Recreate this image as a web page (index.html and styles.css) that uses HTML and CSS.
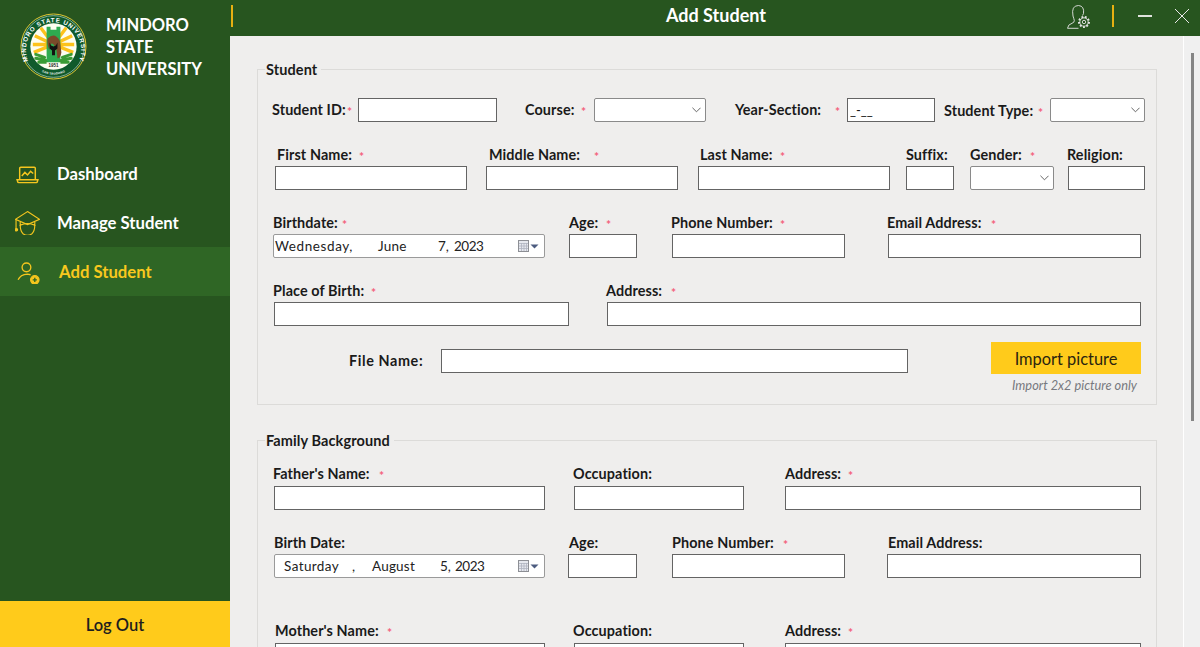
FILE: index.html
```html
<!DOCTYPE html>
<html lang="en">
<head>
<meta charset="utf-8">
<title>Add Student</title>
<link rel="stylesheet" href="styles.css">
</head>
<body>
<div class="app">
  <aside class="sidebar">
    <div class="brand">
      <svg class="seal" viewBox="0 0 68 68" aria-hidden="true">
        <defs>
          <path id="arcTop" d="M9 50 A28 28 0 1 1 59 50"/>
          <path id="arcBot" d="M16 55 A25 25 0 0 0 52 55"/>
        </defs>
        <circle cx="34" cy="34" r="33" fill="#0f5a2c" stroke="#e7c533" stroke-width="1"/>
        <circle cx="34" cy="34" r="31.300" fill="none" stroke="#fff" stroke-width=".5"/>
        <text class="seal-ring"><textPath href="#arcTop" startOffset="50%" text-anchor="middle">MINDORO STATE UNIVERSITY</textPath></text>
        <text class="seal-low"><textPath href="#arcBot" startOffset="50%" text-anchor="middle">SAN TEODORO</textPath></text>
        <circle cx="34" cy="34" r="23.500" fill="#fdfdf0"/>
        <g stroke="#fcc21c" stroke-width="3.400">
          <path d="M34 32 L13 32M34 32 L15 23M34 32 L21 15M34 32 L55 32M34 32 L53 23M34 32 L47 15M34 32 L14 40M34 32 L54 40"/>
        </g>
        <path d="M27 14h4v3h6v-3h4v37h-14z" fill="#2eab50"/>
        <path d="M28 26 q5 -5 9 -2 q4 3 4 8 l1 8 q-1 6 -4 6 l-1 -9 q-3 -7 -5 -6 q-3 2 -2 7 q-3 -6 -2 -12z" fill="#7a4a2a"/>
        <path d="M30 30l1.500 3 2.500 1 2.500-1 1.500-3v6l-2.500 2v5h-3v-5l-2.500-2z" fill="#111"/>
        <g stroke="#3a9b35" stroke-width="3" stroke-linecap="round">
          <path d="M16 42 l9 3M16 46 l10 2M19 50 l8 0M52 42 l-9 3M52 46 l-10 2M49 50 l-8 0"/>
        </g>
        <rect x="27" y="50" width="14" height="6" fill="#fdfdf0"/>
        <text class="seal-year" x="34" y="55" text-anchor="middle">1951</text>
      </svg>
      <div class="brand-name">MINDORO<br>STATE<br>UNIVERSITY</div>
    </div>
    <nav class="nav">
      <a class="nav-item">
        <svg class="nav-icon" viewBox="0 -1.500 24 24" fill="none" stroke="#f5c61e" stroke-width="1.400" aria-hidden="true">
          <path d="M4.500 15V4.500a1 1 0 0 1 1-1h13a1 1 0 0 1 1 1V15"/>
          <path d="M2 15.500h20l-.6 2a1 1 0 0 1-1 .8H3.600a1 1 0 0 1-1-.8z"/>
          <path d="M6.500 12l3-3.500 2.500 2.500 3-3.500 2.500 2"/>
        </svg>
        <span>Dashboard</span>
      </a>
      <a class="nav-item">
        <svg class="nav-icon" viewBox="0 -1 24 24" fill="none" stroke="#f5c61e" stroke-width="1.100" aria-hidden="true">
          <path d="M12 0.500 L23.500 8 L12 13 L0.500 8z"/>
          <path d="M5 10.500 v3 q7 -3 14 0 v-3"/>
          <path d="M5 13.500 q0 6 3 8.500 q4 2.500 8 0 q3 -2.500 3 -8.500"/>
          <path d="M1 8.500 V17"/>
          <circle cx="1.300" cy="18" r="1.200" fill="#f5c61e"/>
        </svg>
        <span>Manage Student</span>
      </a>
      <a class="nav-item is-active">
        <svg class="nav-icon" viewBox="0 -2 24 24" fill="none" stroke="#f5c61e" stroke-width="1.300" aria-hidden="true">
          <circle cx="11" cy="6" r="4.200"/>
          <path d="M3 18 q2 -5 9 -5.500 l3 .6"/>
          <circle cx="19" cy="18" r="4" fill="#f5c61e"/>
          <path d="M17 18h4M19 16v4" stroke="#2f6625"/>
        </svg>
        <span>Add Student</span>
      </a>
    </nav>
    <button class="logout" type="button">Log Out</button>
  </aside>

  <div class="main">
    <header class="topbar">
      <span class="rule"></span>
      <h1 class="title">Add Student</h1>
      <svg class="account" viewBox="0 0 24 24" fill="none" stroke="#e4e4e4" stroke-width=".9" aria-hidden="true">
        <path d="M6 11 q-2 -10.500 5.500 -10.500 q6 .5 5 8 l-1 2"/>
        <path d="M6 11 q1 3 1.300 4.500 q.2 2 -2.300 2.800 q-4 1 -4.500 5 h11"/>
        <circle cx="17" cy="17" r="5" stroke-width="2" stroke-dasharray="1.800 1.600"/>
        <circle cx="17" cy="17" r="4.200"/>
        <circle cx="17" cy="17" r="1.700"/>
      </svg>
      <span class="rule rule-right"></span>
      <span class="min-btn"></span>
      <svg class="close-btn" viewBox="0 0 14 14" stroke="#e8e8e8" stroke-width="1" aria-hidden="true"><path d="M0 0L14 14M14 0L0 14"/></svg>
    </header>
    <div class="body">
      <form class="content">
        <fieldset class="group group-student">
          <legend>Student</legend>
          <div class="row r1">
            <div class="inline i1"><label class="lbl sw74"><span>Student ID:</span><i class="req">*</i></label><input class="box" type="text"></div>
            <div class="inline i2"><label class="lbl sw55"><span>Course:</span><i class="req">*</i></label><div class="combo"><svg class="chev" viewBox="0 0 10 6"><path d="M.5.500L5 5 9.500.500"/></svg></div></div>
            <div class="inline i3"><label class="lbl sw99"><span>Year-Section:</span><i class="req">*</i></label><input class="box mask" type="text" value="_-__"></div>
            <div class="inline i4"><label class="lbl sw93"><span>Student Type:</span><i class="req">*</i></label><div class="combo"><svg class="chev" viewBox="0 0 10 6"><path d="M.5.500L5 5 9.500.500"/></svg></div></div>
          </div>
          <div class="row r2">
            <div class="field"><label class="lbl o2 sw81"><span>First Name:</span><i class="req">*</i></label><input class="box" type="text"></div>
            <div class="field"><label class="lbl o3 sw104"><span>Middle Name:</span><i class="req">*</i></label><input class="box" type="text"></div>
            <div class="field"><label class="lbl o2 sw79"><span>Last Name:</span><i class="req">*</i></label><input class="box" type="text"></div>
            <div class="field"><label class="lbl"><span>Suffix:</span></label><input class="box" type="text"></div>
            <div class="field"><label class="lbl sw59"><span>Gender:</span><i class="req">*</i></label><div class="combo"><svg class="chev" viewBox="0 0 10 6"><path d="M.5.500L5 5 9.500.500"/></svg></div></div>
            <div class="field"><label class="lbl on1"><span>Religion:</span></label><input class="box" type="text"></div>
          </div>
          <div class="row r3">
            <div class="field"><label class="lbl sw68"><span>Birthdate:</span><i class="req">*</i></label>
              <div class="date dw-a"><span class="d1">Wednesday,</span><span class="d2">June</span><span class="d3">7,</span><span class="dy">2023</span>
                <svg class="cal" viewBox="0 0 21 12"><rect x=".5" y=".5" width="10" height="11" fill="#e6e8ee" stroke="#8d8f95"/><path d="M1 3.500h9M1 6h9M1 8.500h9M3.500 3v8M6 3v8M8.500 3v8" stroke="#aeb3bf" stroke-width=".8"/><path d="M12.500 4.500h8l-4 4z" fill="#4d5c80"/></svg></div></div>
            <div class="field"><label class="lbl sw36"><span>Age:</span><i class="req">*</i></label><input class="box" type="text"></div>
            <div class="field"><label class="lbl on1 sw108"><span>Phone Number:</span><i class="req">*</i></label><input class="box" type="text"></div>
            <div class="field"><label class="lbl on1 sw103"><span>Email Address:</span><i class="req">*</i></label><input class="box" type="text"></div>
          </div>
          <div class="row r4">
            <div class="field"><label class="lbl on1 sw97"><span>Place of Birth:</span><i class="req">*</i></label><input class="box" type="text"></div>
            <div class="field"><label class="lbl on1 sw64"><span>Address:</span><i class="req">*</i></label><input class="box" type="text"></div>
          </div>
          <div class="r5">
            <label class="lbl file-lbl"><span>File Name:</span></label>
            <input class="box file-box" type="text">
            <div class="import">
              <button class="import-btn" type="button">Import picture</button>
              <p class="note">Import 2x2 picture only</p>
            </div>
          </div>
        </fieldset>

        <fieldset class="group group-family">
          <legend>Family Background</legend>
          <div class="row f1">
            <div class="field"><label class="lbl on1 sw105"><span>Father's Name:</span><i class="req">*</i></label><input class="box" type="text"></div>
            <div class="field"><label class="lbl on1"><span>Occupation:</span></label><input class="box" type="text"></div>
            <div class="field"><label class="lbl sw62"><span>Address:</span><i class="req">*</i></label><input class="box" type="text"></div>
          </div>
          <div class="row f2">
            <div class="field"><label class="lbl"><span>Birth Date:</span></label>
              <div class="date dw-b"><span class="e1">Saturday</span><span class="e2">,</span><span class="e3">August</span><span class="e4">5,</span><span class="dy">2023</span>
                <svg class="cal" viewBox="0 0 21 12"><rect x=".5" y=".5" width="10" height="11" fill="#e6e8ee" stroke="#8d8f95"/><path d="M1 3.500h9M1 6h9M1 8.500h9M3.500 3v8M6 3v8M8.500 3v8" stroke="#aeb3bf" stroke-width=".8"/><path d="M12.500 4.500h8l-4 4z" fill="#4d5c80"/></svg></div></div>
            <div class="field"><label class="lbl o1"><span>Age:</span></label><input class="box" type="text"></div>
            <div class="field"><label class="lbl sw110"><span>Phone Number:</span><i class="req">*</i></label><input class="box" type="text"></div>
            <div class="field"><label class="lbl o1"><span>Email Address:</span></label><input class="box" type="text"></div>
          </div>
          <div class="row f3">
            <div class="field"><label class="lbl sw111"><span>Mother's Name:</span><i class="req">*</i></label><input class="box" type="text"></div>
            <div class="field"><label class="lbl on1"><span>Occupation:</span></label><input class="box" type="text"></div>
            <div class="field"><label class="lbl sw62"><span>Address:</span><i class="req">*</i></label><input class="box" type="text"></div>
          </div>
        </fieldset>
      </form>
      <div class="scrollbar"><div class="thumb"></div></div>
    </div>
  </div>
</div>
</body>
</html>
```
FILE: styles.css
```css
* { box-sizing: border-box; }
html, body { margin: 0; height: 100%; overflow: hidden; }
body { font-family: "Lato", "Liberation Sans", sans-serif; color: #1a1a1a; }
.app { display: flex; width: 1200px; height: 647px; overflow: hidden; }

/* sidebar */
.sidebar { width: 230px; flex: none; background: #27551f; display: flex; flex-direction: column; }
.brand { display: flex; height: 150px; padding: 13px 0 0 20px; }
.seal { width: 67px; height: 67px; flex: none; }
.seal-ring { font: 700 6.300px "Liberation Sans", sans-serif; fill: #fff; letter-spacing: .8px; }
.seal-low { font: 700 3px "Liberation Sans", sans-serif; fill: #fff; letter-spacing: .2px; }
.seal-year { font: 700 4.500px "Liberation Sans", sans-serif; fill: #222; }
.brand-name { margin: 1px 0 0 19px; color: #fff; font-size: 16.500px; font-weight: 700; line-height: 22px; }
.nav { display: flex; flex-direction: column; }
.nav-item { display: flex; align-items: center; height: 48px; padding-left: 15px; color: #fff; font-size: 16.700px; font-weight: 700; line-height: 20px; }
.nav-item:nth-child(2) { height: 49px; }
.nav-item.is-active { height: 49px; background: #2f6625; color: #f8c81e; }
.nav-item span { margin-left: 17px; }
.nav-icon { width: 25px; height: 25px; flex: none; }
.nav-item.is-active span { margin-left: 19px; }
.logout { margin-top: auto; height: 46px; padding: 2px 0 0; border: 0; background: #ffcb1b; color: #1e1e1e; font: 600 16.500px "Lato", sans-serif; }

/* header */
.main { flex: 1; display: flex; flex-direction: column; min-width: 0; }
.topbar { height: 36px; flex: none; background: #27551f; display: flex; align-items: flex-start; color: #fff; }
.rule { width: 2px; height: 22px; margin: 5px 0 0 1px; background: #e6b012; flex: none; }
.title { margin: 5px 0 0 433px; width: 100px; font-size: 18px; font-weight: 700; line-height: 21px; text-align: center; white-space: nowrap; }
.account { width: 24px; height: 24px; margin: 5px 0 0 301px; flex: none; }
.rule-right { margin-left: 21px; }
.min-btn { width: 14px; height: 2px; margin: 15px 0 0 24px; background: #dfe3dd; flex: none; }
.close-btn { width: 14px; height: 14px; margin: 9px 0 0 23px; flex: none; }

/* form */
.body { flex: 1; display: flex; min-height: 0; background: #efeeed; }
.content { width: 953px; flex: none; overflow: hidden; padding: 26px 0 0 27px; }
.scrollbar { width: 17px; flex: none; border-left: 1px solid #fff; background: #f0f0f0; padding: 17px 0 0 7px; }
.thumb { width: 3px; height: 368px; background: #858585; }
.group { width: 900px; margin: 0; padding: 0; border: 1px solid #dcdbd9; min-inline-size: 0; }
.group legend { margin-left: 7px; padding: 2px 4px 1px 1px; font-size: 14.500px; font-weight: 700; letter-spacing: .1px; line-height: 12px; }
.group-student { height: 343px; padding-top: 21px; }
.group-family { height: 260px; margin-top: 28px; padding-top: 18px; }
.row { display: flex; }
.row + .row { margin-top: 25px; }
.f2 + .f3 { margin-top: 45px; }
.field { display: flex; flex-direction: column; flex: none; gap: 5px; }
.f1 .field, .f3 .field { gap: 6px; }
.lbl { display: flex; height: 14px; padding-top: 1px; align-items: center; font-size: 14.400px; font-weight: 700; letter-spacing: .1px; line-height: 14px; white-space: nowrap; }
.lbl span { flex: none; }
.req { color: #f4607a; font-size: 12px; font-style: normal; font-weight: 700; margin: 4px 0 0 1px; }
.sw36 span { width: 36px; }
.sw55 span { width: 55px; }
.sw59 span { width: 59px; }
.sw62 span { width: 62px; }
.sw64 span { width: 64px; }
.sw68 span { width: 68px; }
.sw74 span { width: 74px; }
.sw79 span { width: 79px; }
.sw81 span { width: 81px; }
.sw93 span { width: 93px; }
.sw97 span { width: 97px; }
.sw99 span { width: 99px; }
.sw103 span { width: 103px; }
.sw104 span { width: 104px; }
.sw105 span { width: 105px; }
.sw108 span { width: 108px; }
.sw110 span { width: 110px; }
.sw111 span { width: 111px; }
.o1 { margin-left: 1px; }
.o2 { margin-left: 2px; }
.o3 { margin-left: 3px; }
.on1 { margin-left: -1px; }
.box { display: block; width: 100%; height: 24px; margin: 0; padding: 0 2px; border: 1px solid #646464; border-radius: 0; background: #fff; font: 400 13px "Lato", sans-serif; color: #111; outline: 0; }
.combo { display: flex; width: 100%; height: 24px; align-items: center; justify-content: flex-end; padding-right: 4px; border: 1px solid #8a8a8a; border-radius: 2px; background: #fff; }
.chev { width: 9px; height: 6px; fill: none; stroke: #555; stroke-width: 1; }
.date { display: flex; align-items: center; width: 100%; height: 24px; border: 1px solid #9a9a9a; border-radius: 2px; background: #fff; font-size: 13.500px; color: #222; white-space: nowrap; }
.dw-a { padding-left: 1px; }
.dw-b { padding-left: 9px; }
.d1 { width: 103px; letter-spacing: .6px; }
.d2 { width: 60px; letter-spacing: .2px; }
.d3 { width: 16px; }
.e1 { width: 68px; letter-spacing: .4px; }
.e2 { width: 20px; }
.e3 { width: 68px; letter-spacing: .2px; }
.e4 { width: 15px; }
.dy { letter-spacing: -.5px; }
.cal { width: 21px; height: 12px; margin-left: auto; margin-right: 5px; }

/* first row: inline labels */
.inline { display: flex; align-items: center; flex: none; }
.i1 { margin-left: 14px; }
.i2 { margin-left: 28px; }
.i3 { margin-left: 29px; }
.i4 { margin-left: 9px; }
.inline .lbl { flex: none; }
.i1 .lbl { width: 86px; margin-top: -2px; }
.i2 .lbl { width: 69px; margin-top: -2px; }
.i3 .lbl { width: 112px; margin-top: -2px; }
.i4 .lbl { width: 106px; }
.i1 .box { width: 139px; }
.i2 .combo { width: 112px; }
.i3 .box { width: 88px; }
.i4 .combo { width: 95px; }

/* column placement per row */
.r2 .field:nth-child(1) { margin-left: 17px; width: 192px; }
.r2 .field:nth-child(2) { margin-left: 19px; width: 192px; }
.r2 .field:nth-child(3) { margin-left: 20px; width: 192px; }
.r2 .field:nth-child(4) { margin-left: 16px; width: 48px; }
.r2 .field:nth-child(5) { margin-left: 16px; width: 84px; }
.r2 .field:nth-child(6) { margin-left: 14px; width: 77px; }
.r3 .field:nth-child(1) { margin-left: 15px; width: 272px; }
.r3 .field:nth-child(2) { margin-left: 24px; width: 68px; }
.r3 .field:nth-child(3) { margin-left: 35px; width: 173px; }
.r3 .field:nth-child(4) { margin-left: 43px; width: 253px; }
.r4 .field:nth-child(1) { margin-left: 16px; width: 295px; }
.r4 .field:nth-child(2) { margin-left: 38px; width: 534px; }
.f1 .field:nth-child(1) { margin-left: 16px; width: 271px; }
.f1 .field:nth-child(2) { margin-left: 29px; width: 170px; }
.f1 .field:nth-child(3) { margin-left: 41px; width: 356px; }
.f2 .field:nth-child(1) { margin-left: 16px; width: 271px; }
.f2 .field:nth-child(2) { margin-left: 23px; width: 69px; }
.f2 .field:nth-child(3) { margin-left: 35px; width: 173px; }
.f2 .field:nth-child(4) { margin-left: 42px; width: 254px; }
.f3 .field:nth-child(1) { margin-left: 17px; width: 270px; }
.f3 .field:nth-child(2) { margin-left: 29px; width: 170px; }
.f3 .field:nth-child(3) { margin-left: 41px; width: 356px; }

/* file row */
.r5 { display: flex; align-items: flex-start; margin-top: 16px; padding-left: 91px; }
.file-lbl { width: 92px; margin-top: 11px; letter-spacing: .6px; }
.file-box { width: 467px; margin-top: 7px; }
.import { width: 150px; margin-left: 83px; flex: none; }
.import-btn { display: block; width: 100%; height: 32px; border: 0; background: #ffcb1b; color: #2a2410; font: 400 16.400px "Lato", sans-serif; }
.note { margin: 4px 4px 0 0; color: #77797f; font-size: 12.800px; font-style: italic; line-height: 14px; text-align: right; }
```
